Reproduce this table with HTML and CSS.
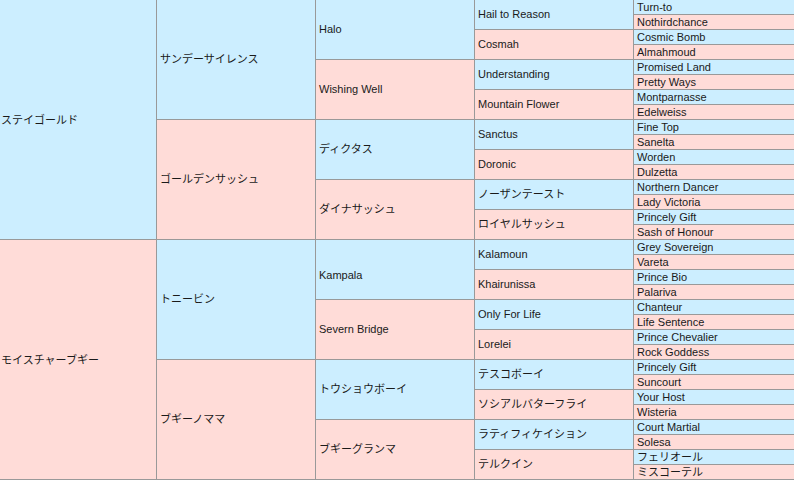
FILE: index.html
```html
<!DOCTYPE html>
<html lang="ja">
<head>
    <meta charset="UTF-8">
    <title>ステイゴールド 血統表</title>
    <link rel="stylesheet" href="styles.css">
</head>
<body>

    <!-- Pedigree: 5 generations -->
    <div class="pedigree">
        <div class="g1 sire">ステイゴールド</div>
        <div class="g2 sire">サンデーサイレンス</div>
        <div class="g3 sire">Halo</div>
        <div class="g4 sire">Hail to Reason</div>
        <div class="g5 sire">Turn-to</div>
        <div class="g5 dam">Nothirdchance</div>
        <div class="g4 dam">Cosmah</div>
        <div class="g5 sire">Cosmic Bomb</div>
        <div class="g5 dam">Almahmoud</div>
        <div class="g3 dam">Wishing Well</div>
        <div class="g4 sire">Understanding</div>
        <div class="g5 sire">Promised Land</div>
        <div class="g5 dam">Pretty Ways</div>
        <div class="g4 dam">Mountain Flower</div>
        <div class="g5 sire">Montparnasse</div>
        <div class="g5 dam">Edelweiss</div>
        <div class="g2 dam">ゴールデンサッシュ</div>
        <div class="g3 sire">ディクタス</div>
        <div class="g4 sire">Sanctus</div>
        <div class="g5 sire">Fine Top</div>
        <div class="g5 dam">Sanelta</div>
        <div class="g4 dam">Doronic</div>
        <div class="g5 sire">Worden</div>
        <div class="g5 dam">Dulzetta</div>
        <div class="g3 dam">ダイナサッシュ</div>
        <div class="g4 sire">ノーザンテースト</div>
        <div class="g5 sire">Northern Dancer</div>
        <div class="g5 dam">Lady Victoria</div>
        <div class="g4 dam">ロイヤルサッシュ</div>
        <div class="g5 sire">Princely Gift</div>
        <div class="g5 dam">Sash of Honour</div>

        <div class="g1 dam">モイスチャーブギー</div>
        <div class="g2 sire">トニービン</div>
        <div class="g3 sire low">Kampala</div>
        <div class="g4 sire">Kalamoun</div>
        <div class="g5 sire">Grey Sovereign</div>
        <div class="g5 dam">Vareta</div>
        <div class="g4 dam">Khairunissa</div>
        <div class="g5 sire">Prince Bio</div>
        <div class="g5 dam">Palariva</div>
        <div class="g3 dam">Severn Bridge</div>
        <div class="g4 sire">Only For Life</div>
        <div class="g5 sire">Chanteur</div>
        <div class="g5 dam">Life Sentence</div>
        <div class="g4 dam">Lorelei</div>
        <div class="g5 sire">Prince Chevalier</div>
        <div class="g5 dam">Rock Goddess</div>
        <div class="g2 dam">ブギーノママ</div>
        <div class="g3 sire">トウショウボーイ</div>
        <div class="g4 sire">テスコボーイ</div>
        <div class="g5 sire">Princely Gift</div>
        <div class="g5 dam">Suncourt</div>
        <div class="g4 dam">ソシアルバターフライ</div>
        <div class="g5 sire">Your Host</div>
        <div class="g5 dam">Wisteria</div>
        <div class="g3 dam">ブギーグランマ</div>
        <div class="g4 sire">ラティフィケイション</div>
        <div class="g5 sire">Court Martial</div>
        <div class="g5 dam">Solesa</div>
        <div class="g4 dam">テルクイン</div>
        <div class="g5 sire">フェリオール</div>
        <div class="g5 dam">ミスコーテル</div>
    </div>

</body>
</html>
```

FILE: styles.css
```css
/* Basic Reset */
* {
    margin: 0;
    padding: 0;
    box-sizing: border-box;
}

body {
    background: #fff;
    font-family: 'Liberation Sans', Arial, 'Noto Sans CJK JP', sans-serif;
    font-size: 11px;
    color: #1a1a1a;
    overflow: hidden;
}

/* Pedigree grid - gaps act as the cell borders */
.pedigree {
    display: grid;
    grid-template-columns: repeat(4, 158px) 170px;
    grid-auto-rows: 14px;
    gap: 1px;
    padding: 1px;
    background: #999;
    width: max-content;
    margin: -1px 0 0 -3px;
}

.pedigree > div {
    display: flex;
    align-items: center;
    padding-left: 3px;
    line-height: 14px;
    white-space: nowrap;
    overflow: hidden;
}

.sire {
    background: #cceeff;
}

.dam {
    background: #ffdcd8;
}

.g1 { grid-column: 1; grid-row: span 16; }
.g2 { grid-column: 2; grid-row: span 8; padding-bottom: 1px; }
.g3 { grid-column: 3; grid-row: span 4; padding-bottom: 1px; }
.g4 { grid-column: 4; grid-row: span 2; padding-bottom: 1px; }
.g5 { grid-column: 5; }

/* name sits a little lower in the source table */
.pedigree > .low {
    padding-top: 12px;
}
```
